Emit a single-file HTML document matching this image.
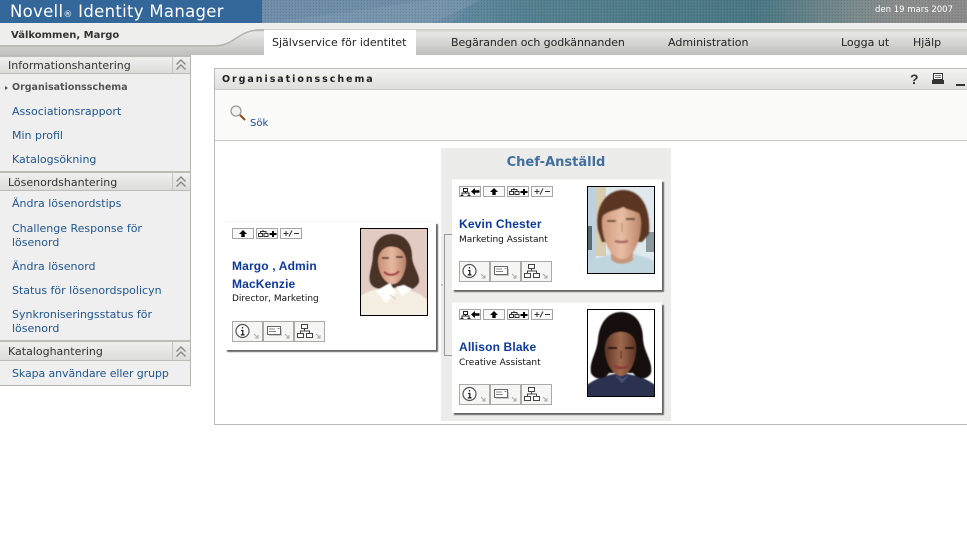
<!DOCTYPE html>
<html lang="sv"><head><meta charset="utf-8"><title>Organisationsschema</title>
<style>
html,body{margin:0;padding:0;background:#fff;width:967px;height:540px;overflow:hidden}
body{position:relative;font-family:"DejaVu Sans","Liberation Sans",sans-serif;font-size:11px}
.a{position:absolute;white-space:nowrap}
.abs{position:absolute}
.lnk{color:#1f5590;font-size:11px;left:12px;line-height:14px}
.hd{position:absolute;left:0;width:190px;height:18px;background:linear-gradient(#f0f0ee,#dcdcd9);border-top:2px solid #bdbdb8;border-bottom:1px solid #bdbdb8}
.hd span{position:absolute;left:8px;top:3px;font-size:11px;color:#333;line-height:14px}
.hd i{position:absolute;left:172px;top:0;width:0;height:100%;border-left:1px solid #c4c4c0}
.card{position:absolute;background:#fff;box-shadow:0 -1px 0 #f6f6f4,2px 2px 1px #666}
.nm{color:#0c3a9c;font-family:"Liberation Sans",sans-serif;font-size:12px;font-weight:bold;line-height:18px;letter-spacing:.15px}
.job{color:#111;font-size:9px;line-height:12px}
.nav{color:#222;font-size:11px;top:36px;line-height:14px}
</style></head><body>
<svg width="0" height="0" style="position:absolute"><defs>
<filter id="b"><feGaussianBlur stdDeviation=".7"/></filter>
<filter id="b2"><feGaussianBlur stdDeviation=".6"/></filter>
<linearGradient id="ban" x1="0" x2="1" y1="0" y2="0"><stop offset="0" stop-color="#6f8da8"/><stop offset=".25" stop-color="#6d8ea8"/><stop offset=".38" stop-color="#55808f"/><stop offset=".7" stop-color="#4a7784"/><stop offset=".84" stop-color="#7a8a8c"/><stop offset=".9" stop-color="#8a8b8b"/><stop offset="1" stop-color="#8a8a8a"/></linearGradient>
<pattern id="dots" width="3" height="3" patternUnits="userSpaceOnUse"><rect width="1" height="1" fill="#000" opacity=".1"/><rect x="1" y="1" width="1" height="1" fill="#fff" opacity=".06"/></pattern>
<linearGradient id="skin1" x1="0" x2="1"><stop offset="0" stop-color="#c98f74"/><stop offset=".5" stop-color="#e6b9a0"/><stop offset="1" stop-color="#b98068"/></linearGradient>
<linearGradient id="skin2" x1="0" x2="1"><stop offset="0" stop-color="#cf9a7c"/><stop offset=".5" stop-color="#e8bea4"/><stop offset="1" stop-color="#bd8568"/></linearGradient>
<linearGradient id="skin3" x1="0" x2="1"><stop offset="0" stop-color="#5c3424"/><stop offset=".5" stop-color="#a06a4e"/><stop offset="1" stop-color="#5c3424"/></linearGradient>
<symbol id="up" viewBox="0 0 22 11"><rect x=".5" y=".5" width="21" height="10" fill="#f8f8f8" stroke="#a5a5a3"/><path d="M11 2l4 4h-2.300v3H9.300V6H7z" fill="#000"/></symbol>
<symbol id="dn" viewBox="0 0 22 11"><rect x=".5" y=".5" width="21" height="10" fill="#f8f8f8" stroke="#a5a5a3"/><path d="M2.500 8.500h4v-3h-4zM8 8.500h4v-3H8zM4.500 5.500V3.500H10v2M7 2v1.500" fill="none" stroke="#333"/><path d="M13.500 5h2.500V3h2v2h2.500v2H18v2h-2V7h-2.500z" fill="#000"/></symbol>
<symbol id="pm" viewBox="0 0 22 11"><rect x=".5" y=".5" width="21" height="10" fill="#f8f8f8" stroke="#a5a5a3"/><path d="M3.500 5.500h5M6 3v5M9 8.500l3-6M14 5.500h5" stroke="#333" fill="none"/></symbol>
<symbol id="lf" viewBox="0 0 22 11"><rect x=".5" y=".5" width="21" height="10" fill="#f8f8f8" stroke="#a5a5a3"/><path d="M4.500 2.500h4v3h-4zM6.500 5.500V7M3 9V7h7v2M1.500 9.500h3M8.500 9.500h3" fill="none" stroke="#222"/><path d="M12 5.500l4-3.500v2.300h4.500v2.500H16V9z" fill="#000"/></symbol>
<symbol id="bi" viewBox="0 0 31 21"><rect x=".5" y=".5" width="30" height="20" fill="#f5f5f3" stroke="#aaa"/><circle cx="10.500" cy="10" r="6.500" fill="#fff" stroke="#555" stroke-width="1.200"/><path d="M10.500 6v1.500M9 9.500h1.800v4M8.800 13.800h3.700" stroke="#222" stroke-width="1.300" fill="none"/><path d="M22 13l4 4m0-3v3h-3" stroke="#aaa" fill="none"/></symbol>
<symbol id="bc" viewBox="0 0 31 21"><rect x=".5" y=".5" width="30" height="20" fill="#f5f5f3" stroke="#aaa"/><rect x="4.500" y="5.500" width="13" height="8" fill="#fff" stroke="#666"/><path d="M6 8h6M6 10.500h7M14.500 7.500h2" stroke="#888"/><path d="M6 14.500h12.500V8" stroke="#ccc" fill="none"/><path d="M22 13l4 4m0-3v3h-3" stroke="#aaa" fill="none"/></symbol>
<symbol id="bo" viewBox="0 0 31 21"><rect x=".5" y=".5" width="30" height="20" fill="#f5f5f3" stroke="#aaa"/><path d="M7.500 3.500h6v4h-6zM3.500 12.500h6v4h-6zM12.500 12.500h6v4h-6zM10.500 7.500v2.500M6.500 12.500V10h9v2.500" fill="#fff" stroke="#444"/><path d="M22 13l4 4m0-3v3h-3" stroke="#aaa" fill="none"/></symbol>
<symbol id="chev" viewBox="0 0 18 18"><path d="M4.500 8.500L9 4l4.500 4.500M4.500 13.500L9 9l4.500 4.500" fill="none" stroke="#8a8a82" stroke-width="1.400"/></symbol>
</defs></svg>

<!-- header -->
<div class="abs" style="left:0;top:0;width:262px;height:23px;background:#336699"></div>
<svg class="abs" style="left:262px;top:0" width="705" height="23"><rect width="705" height="23" fill="url(#ban)"/><path d="M0 23C60 16 110 8 170 0h50L170 23z" fill="#8aa5ba" opacity=".3"/><path d="M190 23L215 0h40l30 23z" fill="#4a7f92" opacity=".25"/><rect width="705" height="23" fill="url(#dots)"/></svg>
<div class="a" style="left:10px;top:0;color:#fff;font-size:16.500px;line-height:23px;letter-spacing:.3px">Novell<span style="font-size:9px">®</span> Identity Manager</div>
<div class="a" style="left:875px;top:3px;color:#fff;font-size:8.500px;line-height:14px">den 19 mars 2007</div>

<!-- nav -->
<div class="abs" style="left:0;top:23px;width:967px;height:32px;background:linear-gradient(#eeeeec 0,#eeeeec 6px,#d2d3cf 6px,#d2d3cf 8px,#e8e8e5 9px,#bfc0bb 100%)"></div>
<svg class="abs" style="left:0;top:23px" width="270" height="32"><path d="M0 0H270V6H262C240 6 236 22 215 22H0z" fill="#eeeeec"/><path d="M264 7H258C238 8 235 22 215 23H0" fill="none" stroke="#b3b4ae" stroke-width="1.500"/></svg>
<div class="a" style="left:11px;top:29px;font-weight:bold;font-size:10px;color:#333;line-height:14px">Välkommen, Margo</div>
<div class="abs" style="left:264px;top:30px;width:152px;height:25px;background:#fff"></div>
<div class="a nav" style="left:272px">Självservice för identitet</div>
<div class="a nav" style="left:451px;letter-spacing:-.07px">Begäranden och godkännanden</div>
<div class="a nav" style="left:668px">Administration</div>
<div class="a nav" style="left:841px">Logga ut</div>
<div class="a nav" style="left:913px">Hjälp</div>

<!-- sidebar -->
<div class="abs" style="left:0;top:55px;width:190px;height:330px;background:#efefef;border-right:1px solid #b5b5b0;border-bottom:1px solid #b5b5b0"></div>
<div class="hd" style="top:55px;height:16px"><span style="top:2px">Informationshantering</span><i></i><svg class="abs" style="left:172px;top:-1px" width="18" height="18"><use href="#chev"/></svg></div>
<div class="abs" style="left:5px;top:86px;width:0;height:0;border-left:3px solid #555;border-top:2px solid transparent;border-bottom:2px solid transparent"></div>
<div class="a" style="left:12px;top:81px;font-weight:bold;font-size:9.500px;color:#555;line-height:14px">Organisationsschema</div>
<div class="a lnk" style="top:105px">Associationsrapport</div>
<div class="a lnk" style="top:129px">Min profil</div>
<div class="a lnk" style="top:153px">Katalogsökning</div>
<div class="hd" style="top:171px;height:17px"><span>Lösenordshantering</span><i></i><svg class="abs" style="left:172px;top:0" width="18" height="18"><use href="#chev"/></svg></div>
<div class="a lnk" style="top:197px">Ändra lösenordstips</div>
<div class="a lnk" style="top:222px">Challenge Response för</div>
<div class="a lnk" style="top:236px">lösenord</div>
<div class="a lnk" style="top:260px">Ändra lösenord</div>
<div class="a lnk" style="top:284px">Status för lösenordspolicyn</div>
<div class="a lnk" style="top:308px">Synkroniseringsstatus för</div>
<div class="a lnk" style="top:322px">lösenord</div>
<div class="hd" style="top:340px"><span>Kataloghantering</span><i></i><svg class="abs" style="left:172px;top:1px" width="18" height="18"><use href="#chev"/></svg></div>
<div class="a lnk" style="top:367px;letter-spacing:-.1px">Skapa användare eller grupp</div>

<!-- main panel -->
<div class="abs" style="left:214px;top:68px;width:753px;height:355px;border-left:1px solid #bbb;border-top:1px solid #bbb;border-bottom:1px solid #bbb"></div>
<div class="abs" style="left:215px;top:69px;width:752px;height:20px;background:linear-gradient(#f4f4f2,#dededb);border-bottom:1px solid #c8c8c4"></div>
<div class="abs" style="left:215px;top:90px;width:752px;height:50px;background:#fafaf8;border-bottom:1px solid #c8c8c4"></div>
<div class="a" style="left:222px;top:73px;font-weight:bold;font-size:9.500px;letter-spacing:1.950px;color:#222;line-height:14px">Organisationsschema</div>
<div class="a" style="left:910px;top:70px;font-weight:bold;font-size:14px;color:#333;line-height:18px;font-family:'Liberation Sans',sans-serif">?</div>
<svg class="abs" style="left:930px;top:72px" width="37" height="16"><path d="M3.500 1.500h9v6h-9z" fill="#fff" stroke="#333"/><path d="M5 3.500h6M5 5.500h6" stroke="#777"/><rect x="2" y="8" width="12" height="4" fill="#333"/><rect x="26" y="12" width="9" height="2" fill="#333"/></svg>
<svg class="abs" style="left:230px;top:105px" width="18" height="18"><circle cx="6" cy="6" r="5" fill="#f2f2f2" stroke="#9a9a9a" stroke-width="1.300"/><path d="M10 10l5 5" stroke="#8a4a20" stroke-width="2"/></svg>
<div class="a" style="left:250px;top:117px;color:#12449a;font-size:10px;line-height:14px">Sök</div>

<!-- chef panel -->
<div class="abs" style="left:441px;top:148px;width:230px;height:273px;background:#ececea"></div>
<div class="a" style="left:441px;width:230px;text-align:center;top:154px;color:#41709f;font-weight:bold;font-size:13px;line-height:18px">Chef-Anställd</div>
<svg class="abs" style="left:436px;top:230px" width="18" height="130"><path d="M16 4.500H8.500V125.500H16" fill="none" stroke="#999"/><path d="M5 55h2" stroke="#999"/></svg>

<!-- Margo -->
<div class="card" style="left:225px;top:222px;width:211px;height:128px"></div>
<svg class="abs" style="left:232px;top:228px" width="72" height="11"><use href="#up" width="22" height="11"/><use href="#dn" x="24" width="22" height="11"/><use href="#pm" x="48" width="22" height="11"/></svg>
<div class="a nm" style="left:232px;top:257px">Margo , Admin<br>MacKenzie</div>
<div class="a job" style="left:232px;top:293px">Director, Marketing</div>
<svg class="abs" style="left:232px;top:321px" width="94" height="22"><use href="#bi" width="31" height="21"/><use href="#bc" x="31" width="31" height="21"/><use href="#bo" x="62" width="31" height="21"/></svg>
<svg class="abs" style="left:360px;top:228px" width="68" height="88" viewBox="0 0 68 88"><rect width="68" height="88" fill="#e2cbc3"/><g filter="url(#b2)"><path d="M1 88V68C8 62 20 60 32 60C46 60 60 64 67 72V88z" fill="#f5efe3"/><path d="M10 54C8 46 13 38 13 26C14 12 23 6 32 6C45 6 52 16 52 28C52 38 60 46 59 54C56 62 46 64 38 60L24 60C20 62 12 60 10 54z" fill="#4a3028"/><path d="M18 33C18 23 26 17 34 19C43 20 47 28 46 36C45 47 39 57 32 56C24 55 18 44 18 33z" fill="url(#skin1)"/><path d="M24 44C29 48 35 48 39 43" stroke="#a83a48" stroke-width="2.200" fill="none"/><path d="M22 30h7M36 29h7" stroke="#3a2418" stroke-width="1.400"/><path d="M30 55L36 65 26 75 16 63z" fill="#fff"/><path d="M36 59L42 68 52 61 44 57z" fill="#fff"/><path d="M30 67L36 71" stroke="#c8c0b0"/></g><rect x=".5" y=".5" width="67" height="87" fill="none" stroke="#000"/></svg>

<!-- Kevin -->
<div class="card" style="left:452px;top:180px;width:210px;height:110px"></div>
<svg class="abs" style="left:459px;top:186px" width="96" height="11"><use href="#lf" width="22" height="11"/><use href="#up" x="24" width="22" height="11"/><use href="#dn" x="48" width="22" height="11"/><use href="#pm" x="72" width="22" height="11"/></svg>
<div class="a nm" style="left:459px;top:215px">Kevin Chester</div>
<div class="a job" style="left:459px;top:234px">Marketing Assistant</div>
<svg class="abs" style="left:459px;top:261px" width="94" height="22"><use href="#bi" width="31" height="21"/><use href="#bc" x="31" width="31" height="21"/><use href="#bo" x="62" width="31" height="21"/></svg>
<svg class="abs" style="left:587px;top:186px" width="68" height="88" viewBox="0 0 68 88"><rect width="68" height="88" fill="#dfe8ec"/><rect width="9" height="88" fill="#bdd2e0"/><rect x="9" width="10" height="70" fill="#d8cdb0"/><rect x="0" y="40" width="5" height="24" fill="#5a6a72"/><rect x="59" y="46" width="9" height="20" fill="#8a98a0"/><g filter="url(#b)"><path d="M0 88V76C10 72 18 70 26 68H46C54 70 62 72 68 76V88z" fill="#bfd6de"/><path d="M24 60h22v14c-6 5-16 5-22 0z" fill="#c8977a"/><path d="M11 44C7 20 20 4 36 4C53 4 64 20 62 48L55 56L15 56z" fill="#5a3620"/><path d="M15 36C15 24 26 17 36 17C48 17 55 26 54 40C53 58 45 73 35 73C24 73 15 54 15 36z" fill="url(#skin2)"/><path d="M20 35h9M39 33h9" stroke="#4a3020" stroke-width="1.800"/><path d="M35 37v9" stroke="#c49478" stroke-width="1.500"/><path d="M28 55c5 1.500 9 1.500 13 0" stroke="#a8605a" stroke-width="2.400" fill="none"/><path d="M14 32C20 12 44 8 58 32C50 24 42 25 36 21C30 25 20 24 14 32z" fill="#5a3620"/></g><rect x=".5" y=".5" width="67" height="87" fill="none" stroke="#000"/></svg>

<!-- Allison -->
<div class="card" style="left:452px;top:303px;width:210px;height:110px"></div>
<svg class="abs" style="left:459px;top:309px" width="96" height="11"><use href="#lf" width="22" height="11"/><use href="#up" x="24" width="22" height="11"/><use href="#dn" x="48" width="22" height="11"/><use href="#pm" x="72" width="22" height="11"/></svg>
<div class="a nm" style="left:459px;top:338px">Allison Blake</div>
<div class="a job" style="left:459px;top:357px">Creative Assistant</div>
<svg class="abs" style="left:459px;top:384px" width="94" height="22"><use href="#bi" width="31" height="21"/><use href="#bc" x="31" width="31" height="21"/><use href="#bo" x="62" width="31" height="21"/></svg>
<svg class="abs" style="left:587px;top:309px" width="68" height="88" viewBox="0 0 68 88"><rect width="68" height="88" fill="#fff"/><g filter="url(#b2)"><path d="M0 88V76C8 70 18 66 34 64C50 66 60 70 68 76V88z" fill="#2a3350"/><path d="M4 64C2 52 10 44 11 30C13 10 24 3 34 3C48 3 56 14 56 30C57 44 66 52 64 64C60 72 50 70 46 64H22C18 70 8 72 4 64z" fill="#130e10"/><path d="M18 38C19 26 28 22 36 23C45 24 50 30 49 42C48 56 41 67 34 67C26 67 17 52 18 38z" fill="url(#skin3)"/><path d="M21 39h9M38 39h9" stroke="#1a0c08" stroke-width="2"/><path d="M34 42v8" stroke="#6a3c2a" stroke-width="1.500"/><path d="M27 57c5 2.500 10 2.500 14 0" stroke="#8e3a3a" stroke-width="2.500" fill="none"/><path d="M28 66L35 74 42 66 35 70z" fill="#4a5478"/></g><rect x=".5" y=".5" width="67" height="87" fill="none" stroke="#000"/></svg>
</body></html>
